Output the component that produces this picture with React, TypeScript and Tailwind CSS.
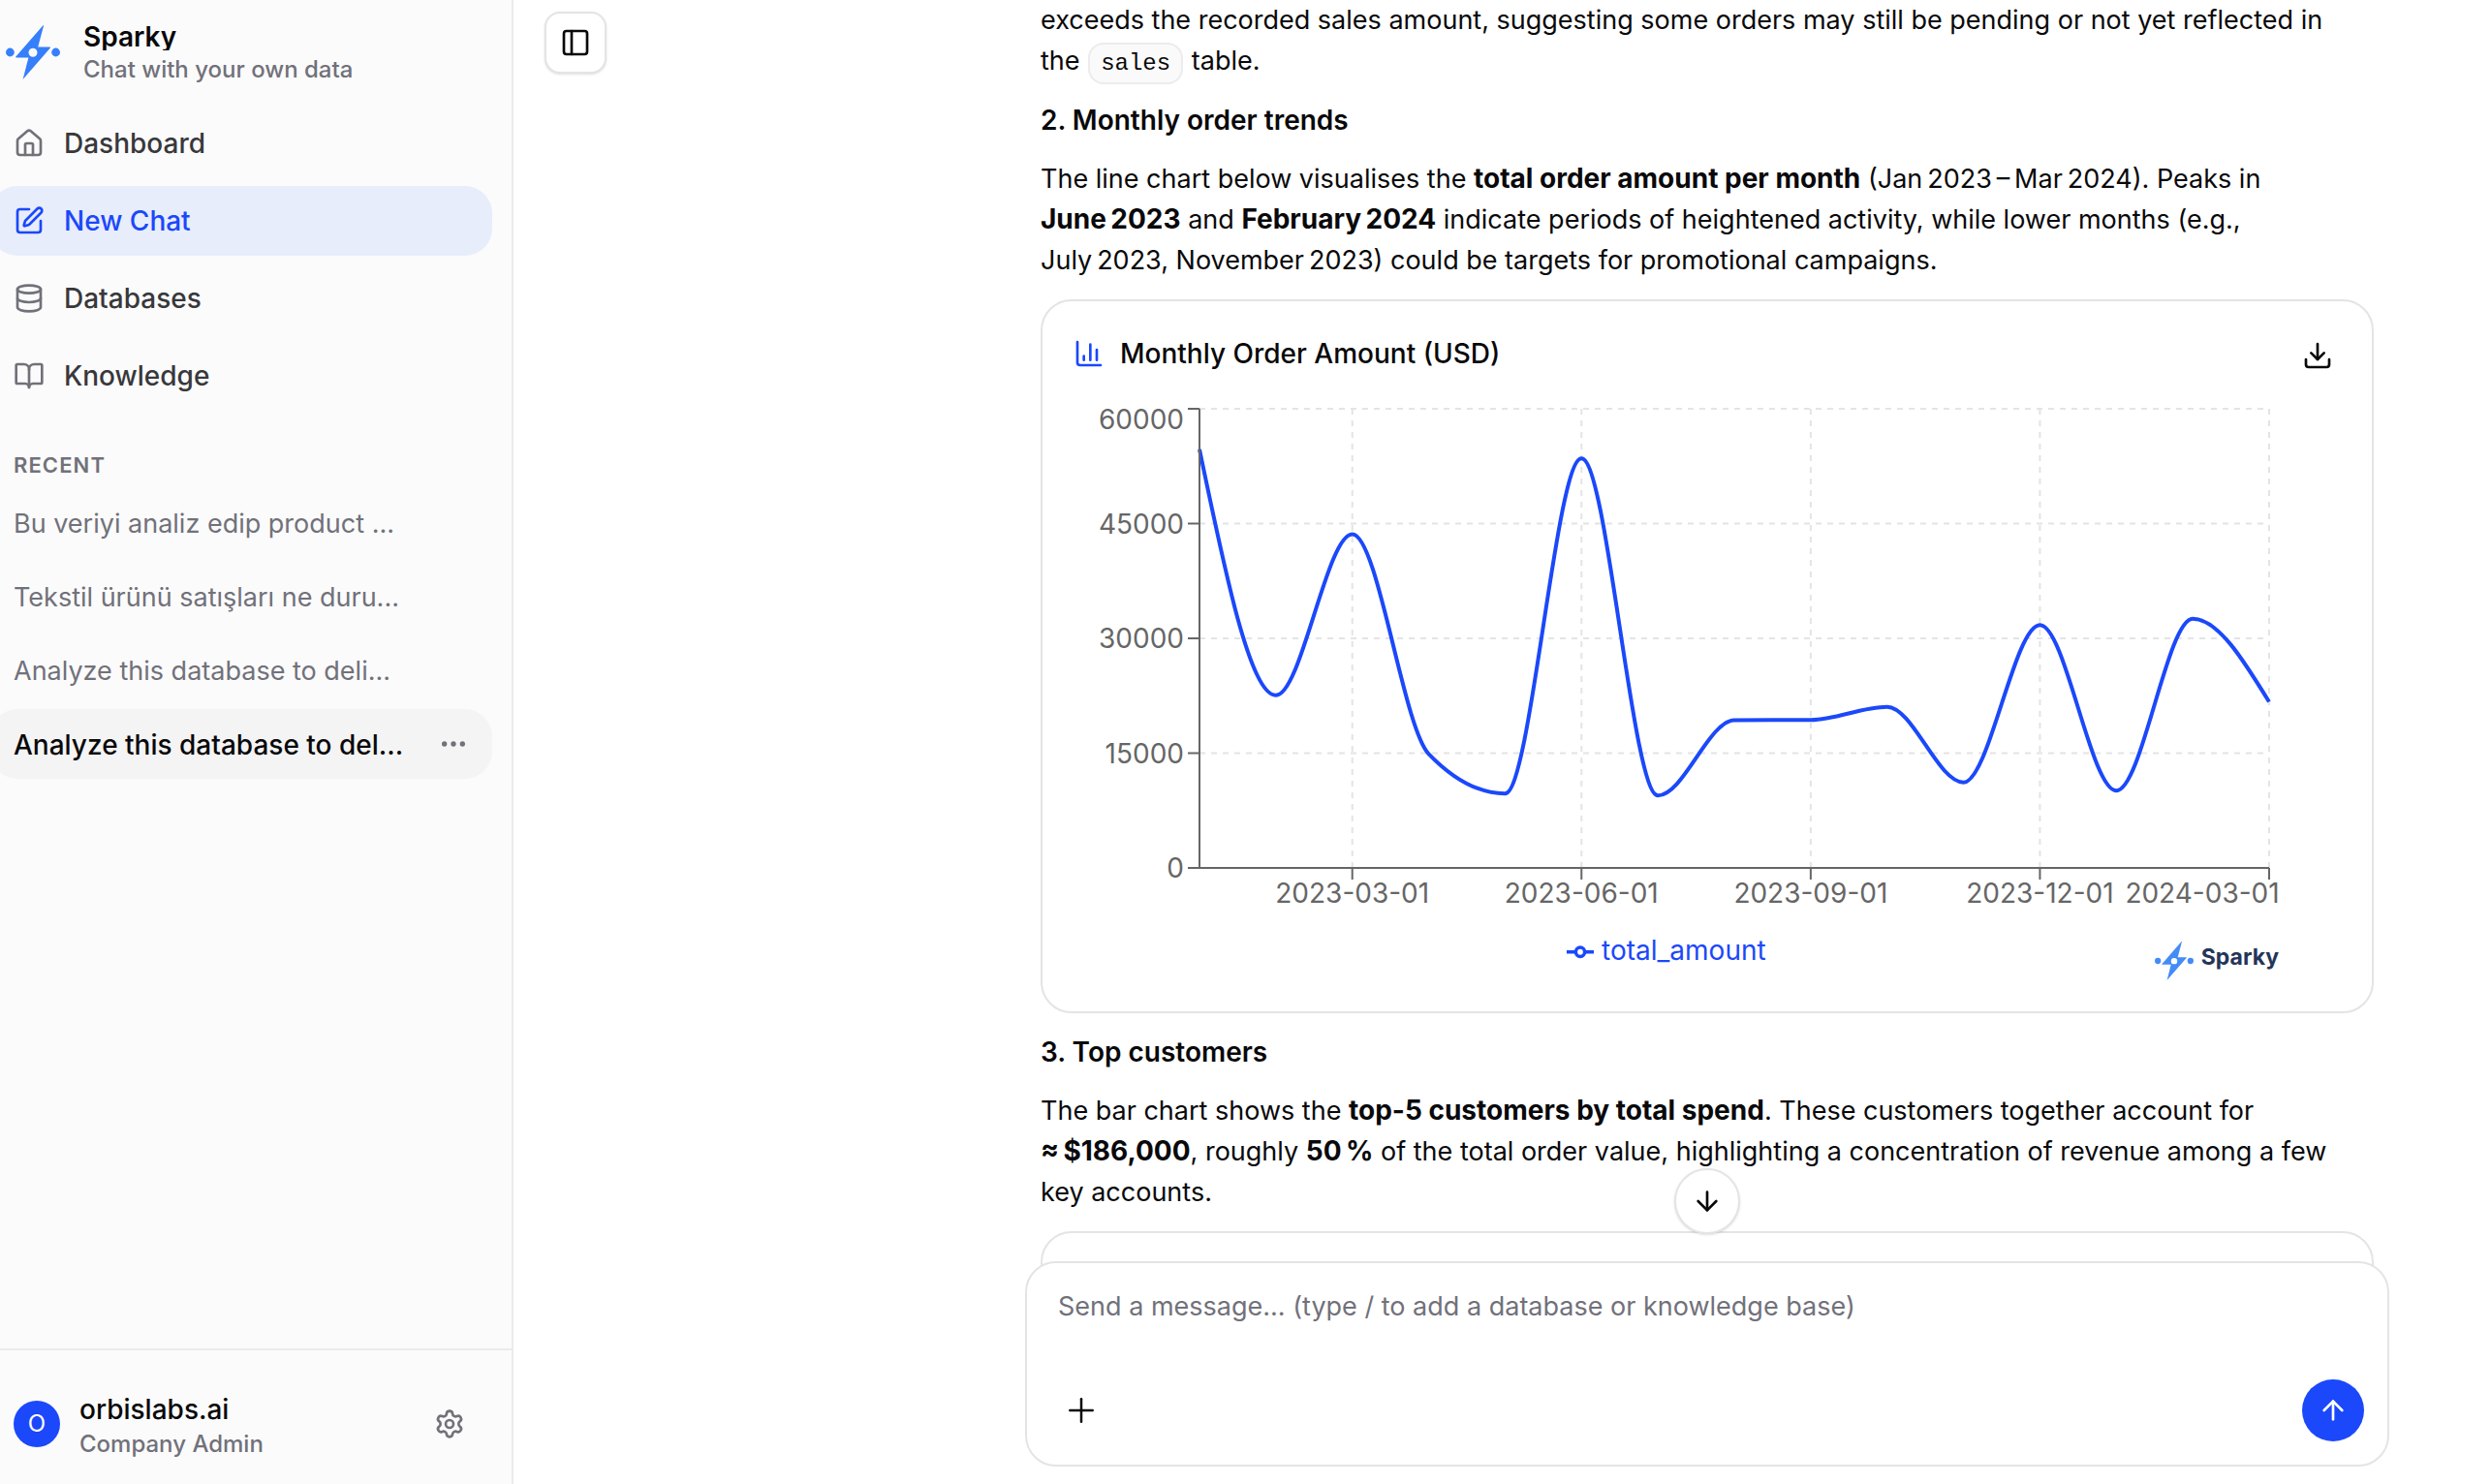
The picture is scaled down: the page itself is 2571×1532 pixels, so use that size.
import React from 'react';
import {
  ArrowDown,
  ArrowUp,
  BookOpen,
  ChartColumn,
  Database,
  Download,
  Ellipsis,
  House,
  PanelLeft,
  Plus,
  Settings,
  SquarePen,
  type LucideIcon
} from 'lucide-react';
import clsx from 'clsx';

interface NavItem {
  label: string;
  icon: LucideIcon;
  active?: boolean;
}

const navItems: NavItem[] = [
  { label: 'Dashboard', icon: House },
  { label: 'New Chat', icon: SquarePen, active: true },
  { label: 'Databases', icon: Database },
  { label: 'Knowledge', icon: BookOpen }
];

const recentChats = [
  { title: 'Bu veriyi analiz edip product ...' },
  { title: 'Tekstil ürünü satışları ne duru...' },
  { title: 'Analyze this database to deli...' },
  { title: 'Analyze this database to del...', active: true }
];

// Monthly totals, Jan 2023 - Mar 2024
const totals = [
  54700, 22560, 43600, 14900, 9730, 53500, 9470, 19300, 19340, 21050, 11180, 31740, 10100, 32550, 21700
];

const xTicks = [
  { index: 2, label: '2023-03-01' },
  { index: 5, label: '2023-06-01' },
  { index: 8, label: '2023-09-01' },
  { index: 11, label: '2023-12-01' },
  { index: 14, label: '2024-03-01' }
];

const yTicks = [0, 15000, 30000, 45000, 60000];

const PLOT = { left: 130, right: 1234, top: 15, bottom: 489 };

const xAt = (index: number) => PLOT.left + ((PLOT.right - PLOT.left) * index) / (totals.length - 1);
const yAt = (value: number) => PLOT.bottom - ((PLOT.bottom - PLOT.top) * value) / 60000;

// Monotone cubic interpolation through evenly spaced points
function monotonePath(values: number[]) {
  const pts = values.map((v, i) => [xAt(i), yAt(v)]);
  const h = pts[1][0] - pts[0][0];
  const slopes = pts.slice(1).map((p, i) => (p[1] - pts[i][1]) / h);
  const last = pts.length - 1;
  const tangents = pts.map((_, i) => {
    if (i === 0 || i === last) return 0;
    const a = slopes[i - 1];
    const b = slopes[i];
    return (Math.sign(a) + Math.sign(b)) * Math.min(Math.abs(a), Math.abs(b), 0.5 * Math.abs((a + b) / 2));
  });
  tangents[0] = (3 * slopes[0] - tangents[1]) / 2;
  tangents[last] = (3 * slopes[last - 1] - tangents[last - 1]) / 2;

  return pts.slice(1).reduce((d, [x, y], i) => {
    const [px, py] = pts[i];
    const c1 = `${px + h / 3},${py + (tangents[i] * h) / 3}`;
    const c2 = `${x - h / 3},${y - (tangents[i + 1] * h) / 3}`;
    return `${d}C${c1},${c2},${x},${y}`;
  }, `M${pts[0][0]},${pts[0][1]}`);
}

function SparkyMark({ className }: { className?: string }) {
  return (
    <svg viewBox="0 0 56 56" className={className} fill="currentColor" aria-hidden="true">
      <path
        fillRule="evenodd"
        d="M39.2 0L33.2 22.6H45.4a.6.6 0 0 1 .5 1L17.6 56 23.4 33.4H10.8a.6.6 0 0 1-.5-1L38.2.4ZM28 23.7a4.5 4.5 0 1 0 0 9 4.5 4.5 0 0 0 0-9Z"
      />
      <circle cx="4.4" cy="28" r="4.4" />
      <circle cx="51.6" cy="28" r="4.4" />
    </svg>
  );
}

function Sidebar() {
  return (
    <aside className="flex w-[530px] shrink-0 flex-col border-r-2 border-[#ebebec] bg-[#fbfbfb]">
      <div className="flex items-start gap-6 pt-6 pl-1.5">
        <SparkyMark className="mt-0.5 size-14 text-[#367ffb]" />
        <div className="flex flex-col gap-1">
          <span className="overflow-hidden text-[28px] leading-none font-semibold">Sparky</span>
          <span className="text-2xl font-medium text-[#71717a]">Chat with your own data</span>
        </div>
      </div>

      <nav className="mt-6 mr-5 -ml-2.5 flex flex-col gap-2">
        {navItems.map(({ label, icon: Icon, active }) => (
          <a
            key={label}
            href="#"
            className={clsx(
              'flex h-[72px] items-center gap-5 rounded-[28px] px-6 text-[28px] font-medium',
              active ? 'bg-[#e7edfa] text-[#1b48fa]' : 'text-[#38383b]'
            )}
          >
            <Icon className={clsx('size-8', !active && 'text-[#71717a]')} />
            {label}
          </a>
        ))}
      </nav>

      <h2 className="mt-10 ml-3.5 text-[22px] leading-8 font-semibold tracking-wider text-[#71717a]">RECENT</h2>
      <ul className="mt-2 mr-5 -ml-2.5 flex flex-col gap-1">
        {recentChats.map((chat) => (
          <li
            key={chat.title}
            className={clsx(
              'flex h-[72px] items-center justify-between rounded-[28px] px-6',
              chat.active ? 'bg-[#f4f4f4] text-[28px] font-medium text-[#09090b]' : 'text-[27px] text-[#71717a]'
            )}
          >
            <a href="#" className="pt-0.5 whitespace-nowrap">{chat.title}</a>
            {chat.active && (
              <button aria-label="Chat options" className="text-[#71717a]">
                <Ellipsis className="size-8" />
              </button>
            )}
          </li>
        ))}
      </ul>

      <div className="mt-auto flex h-[140px] items-center gap-5 border-t-2 border-[#ebebec] pt-3.5 pr-12 pl-3.5">
        <span className="flex size-12 items-center justify-center rounded-full bg-[#1b48fa] text-2xl text-white">O</span>
        <div className="flex flex-1 flex-col pt-1.5">
          <span className="text-[28px] leading-9 font-medium">orbislabs.ai</span>
          <span className="text-2xl leading-9 font-medium text-[#71717a]">Company Admin</span>
        </div>
        <button aria-label="Settings" className="text-[#71717a]">
          <Settings className="size-8" />
        </button>
      </div>
    </aside>
  );
}

function OrdersChart() {
  return (
    <svg viewBox="0 0 1308 553" className="block w-full text-[28px]" role="img" aria-label="Monthly Order Amount">
      {/* Grid */}
      <g stroke="#e4e4e6" strokeWidth="2" strokeDasharray="6 6">
        {yTicks.slice(1).map((v) => (
          <line key={v} x1={PLOT.left} x2={PLOT.right} y1={yAt(v)} y2={yAt(v)} />
        ))}
        {xTicks.map(({ index }) => (
          <line key={index} x1={xAt(index)} x2={xAt(index)} y1={PLOT.top} y2={PLOT.bottom} />
        ))}
      </g>

      <path d={monotonePath(totals)} fill="none" stroke="#1b48fa" strokeWidth="4" />

      {/* Axes */}
      <g stroke="#666" strokeWidth="2">
        <line x1={PLOT.left} x2={PLOT.left} y1={PLOT.top} y2={PLOT.bottom} />
        <line x1={PLOT.left} x2={PLOT.right} y1={PLOT.bottom} y2={PLOT.bottom} />
        {yTicks.map((v) => (
          <line key={v} x1={PLOT.left - 12} x2={PLOT.left} y1={yAt(v)} y2={yAt(v)} />
        ))}
        {xTicks.map(({ index }) => (
          <line key={index} x1={xAt(index)} x2={xAt(index)} y1={PLOT.bottom} y2={PLOT.bottom + 12} />
        ))}
      </g>
      <g fill="#666">
        {yTicks.map((v) => (
          <text key={v} x={PLOT.left - 16} y={Math.max(yAt(v) + 10, 36)} textAnchor="end">{v}</text>
        ))}
        {xTicks.map(({ index, label }) => (
          <text key={label} x={Math.min(xAt(index), 1165)} y={525} textAnchor="middle">{label}</text>
        ))}
      </g>
    </svg>
  );
}

function ChartCard() {
  return (
    <section className="rounded-[32px] border-2 border-[#e4e4e6] bg-white p-8">
      <div className="flex items-start justify-between">
        <div className="flex h-11 items-center gap-4">
          <ChartColumn className="size-8 text-[#1b48fa]" />
          <h4 className="text-[28px] font-medium">Monthly Order Amount (USD)</h4>
        </div>
        <button aria-label="Download chart" className="p-2">
          <Download className="size-8" />
        </button>
      </div>

      <div className="mt-4">
        <OrdersChart />
        <div className="flex items-start pr-16 pl-27">
          <div className="flex flex-1 items-center justify-center gap-2 text-[28px] leading-[42px] text-[#1b48fa]">
            <svg viewBox="0 0 32 32" className="size-7" fill="none" stroke="currentColor" strokeWidth="4" aria-hidden="true">
              <path d="M0 18h10.7M21.3 18H32" />
              <circle cx="16" cy="18" r="5.3" />
            </svg>
            total_amount
          </div>
          <div className="mt-3 flex items-start gap-2">
            <SparkyMark className="size-10 text-[#438cf8]" />
            <span className="text-[23px] leading-8 font-bold text-[#24345a]">Sparky</span>
          </div>
        </div>
      </div>
    </section>
  );
}

// Short line height so bold runs never stretch the line they sit in
function Strong({ children }: { children: React.ReactNode }) {
  return <strong className="text-[28px] leading-9 font-bold">{children}</strong>;
}

function Messages() {
  return (
    <div className="mx-4 flex flex-col gap-[19px] text-[27px] leading-[42px]">
      <p>
        exceeds the recorded sales amount, suggesting some orders may still be pending or not yet reflected in
        <br />
        the{' '}
        <code className="mx-px rounded-2xl border-2 border-[#ececec] bg-[#fafafa] px-[11px] py-1.5 font-['Liberation_Mono',monospace] text-2xl leading-none">
          sales
        </code>{' '}
        table.
      </p>
      <h3 className="text-[28px] font-semibold">2. Monthly order trends</h3>
      <p>
        The line chart below visualises the <Strong>total order amount per month</Strong>{' '}
        (Jan&#8239;2023&#8239;–&#8239;Mar&#8239;2024). Peaks in
        <br />
        <Strong>June&#8239;2023</Strong> and <Strong>February&#8239;2024</Strong> indicate periods of heightened
        activity, while lower months (e.g.,
        <br />
        July&#8239;2023, November&#8239;2023) could be targets for promotional campaigns.
      </p>
      <ChartCard />
      <h3 className="text-[28px] font-semibold">3. Top customers</h3>
      <p>
        The bar chart shows the <Strong>top-5 customers by total spend</Strong>. These customers together account for
        <br />
        <Strong>≈&#8239;$186,000</Strong>, roughly <Strong>50&#8239;%</Strong> of the total order value, highlighting a
        concentration of revenue among a few
        <br />
        key accounts.
      </p>
      <section className="h-40 rounded-[32px] border-2 border-[#e4e4e6] bg-white" />
    </div>
  );
}

function Composer() {
  return (
    <div className="absolute inset-x-0 bottom-[18px]">
      <button
        aria-label="Scroll to bottom"
        className="absolute bottom-full left-1/2 mb-7 flex size-[68px] -translate-x-1/2 items-center justify-center rounded-full border-2 border-[#e4e4e6] bg-white shadow-sm"
      >
        <ArrowDown className="size-8" />
      </button>
      <form className="rounded-[32px] border-2 border-[#e4e4e6] bg-white p-6">
        <textarea
          aria-label="Message"
          placeholder="Send a message... (type / to add a database or knowledge base)"
          className="block h-24 w-full resize-none px-2 text-[27px] leading-[42px] outline-none placeholder:text-[#71717a]"
        />
        <div className="flex items-center justify-between">
          <button type="button" aria-label="Add" className="flex size-16 items-center justify-center">
            <Plus className="size-10" strokeWidth={1.5} />
          </button>
          <button
            type="button"
            aria-label="Send"
            className="flex size-16 items-center justify-center rounded-full bg-[#1b48fa] text-white"
          >
            <ArrowUp className="size-8" />
          </button>
        </div>
      </form>
    </div>
  );
}

export default function App() {
  return (
    <div className="flex h-screen overflow-hidden bg-white font-[Inter,sans-serif] text-[#09090b]">
      <Sidebar />
      <main className="flex min-w-0 flex-1 justify-between pr-[105px] pl-8">
        <button
          aria-label="Toggle sidebar"
          className="mt-3 flex size-16 shrink-0 items-center justify-center rounded-2xl border-2 border-[#e4e4e6] bg-white shadow-sm"
        >
          <PanelLeft className="size-8" />
        </button>
        <div className="relative h-full w-full max-w-[1408px] overflow-hidden">
          <Messages />
          <Composer />
        </div>
      </main>
    </div>
  );
}
